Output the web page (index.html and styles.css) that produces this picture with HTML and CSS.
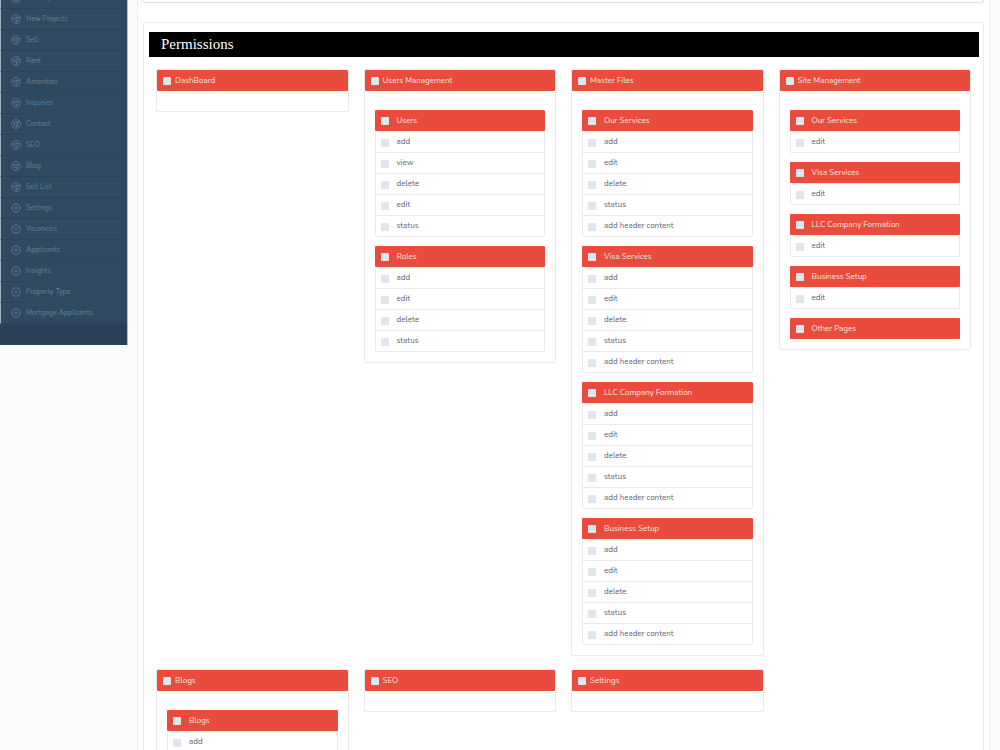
FILE: index.html
```html
<!DOCTYPE html>
<html lang="en">

<head>
  <meta charset="UTF-8">
  <title>Permissions</title>
  <link rel="stylesheet" href="styles.css">
</head>

<body>
  <svg class="defs" width="0" height="0">
    <symbol id="chrome" viewBox="0 0 24 24">
      <circle cx="12" cy="12" r="10.5"/>
      <circle cx="12" cy="12" r="4"/>
      <path d="M12 8h9M8.500 14L4 6.500M15.500 14L11 22"/>
    </symbol>
    <symbol id="gear" viewBox="0 0 24 24">
      <path d="M20.2 9.8L22.9 10.3 22.9 13.7 20.2 14.2 19.4 16.3 20.9 18.5 18.5 20.9 16.3 19.4 14.2 20.2 13.7 22.9 10.3 22.9 9.8 20.2 7.7 19.4 5.5 20.9 3.1 18.5 4.6 16.3 3.8 14.2 1.1 13.7 1.1 10.3 3.8 9.8 4.6 7.7 3.1 5.5 5.5 3.1 7.7 4.6 9.8 3.8 10.3 1.1 13.7 1.1 14.2 3.8 16.3 4.6 18.5 3.1 20.9 5.5 19.4 7.7z"/>
      <circle cx="12" cy="12" r="2.5"/>
    </symbol>
    <symbol id="file" viewBox="0 0 24 24">
      <path d="M3 3h18v18H3zM7 9h10M7 13h10M7 17h10"/>
    </symbol>
  </svg>
  <div class="page">
    <nav class="sidebar">
      <ul id="menu"></ul>
    </nav>
    <main class="content">
      <div class="details"></div>
      <section class="permissions">
        <h1>Permissions</h1>
        <div class="cards" id="cards"></div>
      </section>
    </main>
  </div>
  <script src="script.js"></script>
</body>

</html>
```
FILE: styles.css
```css
* {
  box-sizing: border-box;
}

body {
  margin: 0;
  height: 100vh;
  overflow: hidden;
  background-color: #fbfbfb;
  font-family: Nunito, "Noto Sans", sans-serif;
  font-size: 8px;
  line-height: 10px;
  color: #5d5f78;
}

ul {
  list-style: none;
  margin: 0;
  padding: 0;
}

.defs {
  position: absolute;
}

.page {
  display: flex;
  align-items: flex-start;
}

/* sidebar */
.sidebar {
  width: 128px;
  flex-shrink: 0;
  padding-bottom: 21px;
  background-color: #2a4058;
  border-right: 1px solid #b3bec8;
}

.sidebar ul {
  margin-top: -12px;
}

.sidebar a {
  display: flex;
  align-items: center;
  gap: 5px;
  height: 21px;
  padding-left: 10px;
  border-left: 1px solid #a3b3bf;
  border-bottom: 1px solid #29435c;
  background-color: #2f4a60;
  color: #637a95;
  font-size: 7px;
  font-weight: 500;
  text-decoration: none;
}

.sidebar svg {
  width: 10px;
  height: 10px;
  fill: none;
  stroke: #637a95;
  stroke-width: 2;
}

/* content */
.content {
  flex: 1;
  min-height: 100vh;
  margin: 0 10px 0 9px;
  padding: 0 5px;
  background-color: #fff;
  border: 1px solid #eceff1;
  border-width: 0 1px;
}

.details {
  height: 3px;
  margin-bottom: 19px;
  border: 1px solid #dde1e5;
  border-top: 0;
  border-radius: 0 0 3px 3px;
}

.permissions {
  padding: 9px 4px 9px 5px;
  border: 1px solid #e9ebed;
}

h1 {
  margin: 0;
  padding-left: 12px;
  background-color: #000;
  color: #fff;
  font: 15px/25px "Liberation Serif", serif;
}

.cards {
  display: grid;
  grid-template-columns: repeat(4, 1fr);
  align-items: start;
  gap: 13px 15px;
  padding: 12px 8px 12px 7px;
}

.card {
  border: 1px solid #e8eaec;
  border-radius: 2px;
}

.card-body {
  padding: 10px;
}

.group {
  margin-top: 9px;
}

label {
  display: flex;
  align-items: center;
  height: 20px;
  padding-left: 6px;
  gap: 8px;
}

label.head {
  height: 21px;
  border-radius: 1px;
  background-color: #e94c3d;
  color: #fde3e0;
}

.card > label.head {
  gap: 4px;
}

.group ul {
  border: 1px solid #e8ebee;
  border-bottom: 0;
  border-radius: 2px;
}

.group li {
  border-bottom: 1px solid #e8ebee;
}

.group li label {
  padding-left: 5px;
}

input[type=checkbox] {
  appearance: none;
  width: 8px;
  height: 8px;
  margin: 1px 0 0;
  border-radius: 1px;
  background-color: #e0e6ed;
}
```
FILE: script.js
```javascript
const menu = [
  ['file', 'Developers'],
  ['chrome', 'New Projects'],
  ['chrome', 'Sell'],
  ['chrome', 'Rent'],
  ['chrome', 'Amenities'],
  ['chrome', 'Inquiries'],
  ['chrome', 'Contact'],
  ['chrome', 'SEO'],
  ['chrome', 'Blog'],
  ['chrome', 'Sell List'],
  ['gear', 'Settings'],
  ['gear', 'Vacancies'],
  ['gear', 'Applicants'],
  ['gear', 'Insights'],
  ['gear', 'Property Type'],
  ['gear', 'Mortgage Applicants']
]

const full = ['add', 'edit', 'delete', 'status', 'add header content']
const cards = [
  ['DashBoard', []],
  ['Users Management', [
    ['Users', ['add', 'view', 'delete', 'edit', 'status']],
    ['Roles', ['add', 'edit', 'delete', 'status']]
  ]],
  ['Master Files', [
    ['Our Services', full],
    ['Visa Services', full],
    ['LLC Company Formation', full],
    ['Business Setup', full]
  ]],
  ['Site Management', [
    ['Our Services', ['edit']],
    ['Visa Services', ['edit']],
    ['LLC Company Formation', ['edit']],
    ['Business Setup', ['edit']],
    ['Other Pages', []]
  ]],
  ['Blogs', [['Blogs', ['add']]]],
  ['SEO', []],
  ['Settings', []]
]

function check(text, cls) {
  return `<label class="${cls}"><input type="checkbox"><span>${text}</span></label>`
}

function group([name, actions]) {
  const rows = actions.map(a => `<li>${check(a, 'action')}</li>`).join('')
  return `<div class="group">${check(name, 'head')}${rows ? `<ul>${rows}</ul>` : ''}</div>`
}

document.getElementById('menu').innerHTML = menu.map(([icon, text]) =>
  `<li><a href="#"><svg><use href="#${icon}"/></svg><span>${text}</span></a></li>`).join('')

document.getElementById('cards').innerHTML = cards.map(([name, groups]) =>
  `<div class="card">${check(name, 'head')}<div class="card-body">${groups.map(group).join('')}</div></div>`).join('')
```
